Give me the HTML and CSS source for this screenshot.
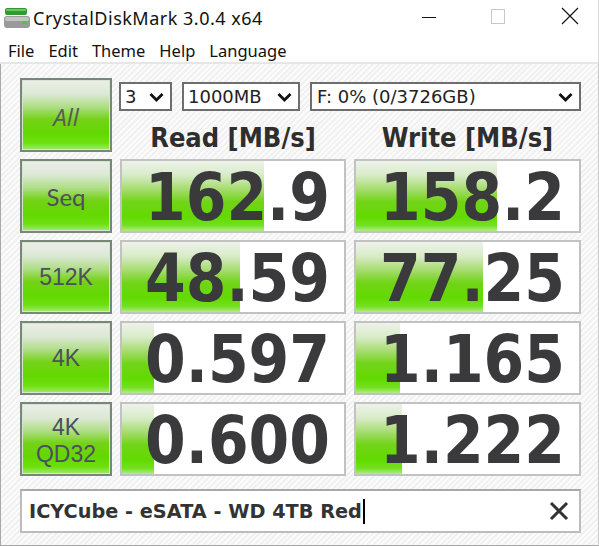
FILE: index.html
```html
<!DOCTYPE html>
<html>
<head>
<meta charset="utf-8">
<link rel="stylesheet" href="styles.css">
</head>
<body>
<div class="window">
  <div class="titlebar">
    <svg class="appicon" width="28" height="24" viewBox="0 0 28 24">
      <rect x="2" y="2" width="22" height="7" rx="2" fill="#2f9a2f"/>
      <rect x="3" y="3" width="20" height="2" rx="1" fill="#66cc55"/>
      <rect x="1" y="10" width="26" height="12" rx="3" fill="#9a9a9a"/>
      <rect x="2" y="11" width="24" height="4" rx="2" fill="#c4c4c4"/>
      <rect x="19" y="15" width="5" height="3" rx="1" fill="#44cc33"/>
    </svg>
    <span class="title">CrystalDiskMark 3.0.4 x64</span>
    <div class="controls">
      <svg class="ctl min" width="16" height="16" viewBox="0 0 16 16"><line x1="1" y1="8.5" x2="15" y2="8.5" stroke="#111" stroke-width="1"/></svg>
      <svg class="ctl max" width="16" height="16" viewBox="0 0 16 16"><rect x="1.5" y="1.5" width="13" height="14" fill="none" stroke="#c8c8c8" stroke-width="1"/></svg>
      <svg class="ctl close" width="18" height="18" viewBox="0 0 18 18"><path d="M1 1 L17 17 M17 1 L1 17" stroke="#111" stroke-width="1.1"/></svg>
    </div>
  </div>
  <div class="menubar">
    <span>File</span><span>Edit</span><span>Theme</span><span>Help</span><span>Language</span>
  </div>
  <div class="main">
    <div class="grid">
      <div class="btn btn-all">All</div>
      <div class="top">
        <div class="selects">
          <div class="select s-count"><span>3</span><svg width="15" height="10" viewBox="0 0 15 10"><polyline points="1.5,2 7.5,8 13.5,2" fill="none" stroke="#111" stroke-width="2.8"/></svg></div>
          <div class="select s-size"><span>1000MB</span><svg width="15" height="10" viewBox="0 0 15 10"><polyline points="1.5,2 7.5,8 13.5,2" fill="none" stroke="#111" stroke-width="2.8"/></svg></div>
          <div class="select s-drive"><span>F: 0% (0/3726GB)</span><svg width="15" height="10" viewBox="0 0 15 10"><polyline points="1.5,2 7.5,8 13.5,2" fill="none" stroke="#111" stroke-width="2.8"/></svg></div>
        </div>
        <div class="headers">
          <div class="hdr">Read [MB/s]</div>
          <div class="hdr">Write [MB/s]</div>
        </div>
      </div>

      <div class="btn btn-seq">Seq</div>
      <div class="cell" style="background-size:142px 100%, auto"><span class="val">162.9</span></div>
      <div class="cell" style="background-size:141px 100%, auto"><span class="val">158.2</span></div>

      <div class="btn">512K</div>
      <div class="cell" style="background-size:118px 100%, auto"><span class="val">48.59</span></div>
      <div class="cell" style="background-size:127px 100%, auto"><span class="val">77.25</span></div>

      <div class="btn">4K</div>
      <div class="cell" style="background-size:32px 100%, auto"><span class="val">0.597</span></div>
      <div class="cell" style="background-size:44px 100%, auto"><span class="val">1.165</span></div>

      <div class="btn btn-two"><span class="ln">4K</span><span class="ln">QD32</span></div>
      <div class="cell" style="background-size:32px 100%, auto"><span class="val">0.600</span></div>
      <div class="cell" style="background-size:46px 100%, auto"><span class="val">1.222</span></div>
    </div>

    <div class="comment">
      <span class="ctext">ICYCube - eSATA - WD 4TB Red</span><span class="caret"></span>
      <svg class="cclose" width="20" height="20" viewBox="0 0 20 20"><path d="M2 2 L18 18 M18 2 L2 18" stroke="#333" stroke-width="3"/></svg>
    </div>
  </div>
</div>
</body>
</html>
```

FILE: styles.css
```css
* { box-sizing: border-box; }
html, body { margin: 0; padding: 0; }
body {
  width: 599px;
  height: 546px;
  background: #ffffff;
  font-family: "Noto Sans", "Open Sans", sans-serif;
  overflow: hidden;
}
.window {
  width: 599px;
  height: 546px;
  display: flex;
  flex-direction: column;
}
.titlebar {
  height: 35px;
  display: flex;
  align-items: center;
  padding-left: 3px;
  background: #fff;
  border-right: 1px solid #d8d8d8;
}
.appicon { margin-right: 2px; margin-top: 1px; }
.title {
  font-size: 18px;
  color: #111;
  letter-spacing: 0.5px;
}
.controls {
  margin-left: auto;
  display: flex;
  align-items: center;
  height: 35px;
}
.ctl { display: block; }
.min { margin-right: 53px; margin-top: -2px; }
.max { margin-right: 55px; margin-top: -3px; }
.close { margin-right: 19px; margin-top: -3px; }

.menubar {
  height: 29px;
  display: flex;
  align-items: center;
  padding-left: 8px;
  padding-top: 3px;
  gap: 14px;
  font-size: 16.5px;
  color: #111;
  border-bottom: 2px solid #e6e6e6;
  border-right: 1px solid #d8d8d8;
}

.main {
  flex: 1;
  border-left: 1px solid #a9a9a9;
  border-right: 1px solid #c8c8c8;
  border-bottom: 1px solid #a9a9a9;
  padding: 14px 0 0 19px;
  background-color: #f7f7f7;
  background-image: repeating-linear-gradient(135deg, #fbfbfb 0px, #fbfbfb 2px, #f1f1f1 2px, #f1f1f1 4px);
}

.grid {
  display: grid;
  grid-template-columns: 92px 226px 227px;
  grid-auto-rows: 74px;
  column-gap: 8px;
  row-gap: 7px;
}

.btn {
  border: 2px solid #788876;
  box-shadow: inset 0 0 0 1px #d8e4d2;
  background: linear-gradient(to bottom, #eceeea 0%, #dce8d4 20%, #b0de88 38%, #74d218 56%, #62d800 76%, #6ee010 90%, #a4e878 100%);
  display: flex;
  align-items: center;
  justify-content: center;
  font-family: "Liberation Sans", "Open Sans", sans-serif;
  font-size: 23px;
  color: #4e4e5e;
}
.btn-all { font-family: "Open Sans", sans-serif; font-style: italic; font-size: 24px; color: #5a5a5a; padding-top: 2px; }
.btn-seq { font-family: "Lato", "Open Sans", sans-serif; font-size: 24px; }
.btn-two {
  flex-direction: column;
  gap: 1px;
  padding-top: 3px;
}
.ln { display: block; line-height: 26px; height: 26px; }

.top {
  grid-column: 2 / 4;
  display: flex;
  flex-direction: column;
}
.selects {
  display: flex;
  gap: 10px;
  margin-top: 4px;
  margin-left: -1px;
}
.select {
  height: 29px;
  border: 2px solid #6e6e6e;
  background: #fff;
  display: flex;
  align-items: center;
  padding-left: 4px;
  padding-right: 6px;
  font-family: "DejaVu Sans", sans-serif;
  font-size: 18px;
  color: #222;
}
.select span { flex: 1; line-height: 1; }
.select svg { display: block; }
.s-count { width: 53px; }
.s-size { width: 118px; }
.s-drive { width: 271px; padding-left: 5px; }

.headers {
  flex: 1;
  display: grid;
  grid-template-columns: 226px 227px;
  column-gap: 8px;
  align-items: center;
  padding-top: 11px;
}
.hdr {
  text-align: center;
  font-family: "DejaVu Sans Condensed", "DejaVu Sans", sans-serif;
  font-weight: bold;
  font-size: 27px;
  line-height: 1;
  color: #2e2e2e;
}

.cell {
  border: 2px solid #c2c2c2;
  background-color: #ffffff;
  background-image:
    linear-gradient(to bottom, #eef2ea 0%, #d8ecc8 20%, #a6dc70 40%, #72d418 58%, #62da00 80%, #74e020 92%, #b0ec88 100%),
    linear-gradient(#ffffff, #ffffff);
  background-repeat: no-repeat;
  display: flex;
  align-items: center;
  justify-content: flex-end;
  padding-right: 14px;
}
.val {
  font-family: "DejaVu Sans Condensed", "DejaVu Sans", sans-serif;
  font-weight: bold;
  font-size: 65px;
  line-height: 1;
  color: #3a3a3c;
  margin-top: 3px;
}

.comment {
  margin-top: 13px;
  width: 561px;
  height: 44px;
  border: 2px solid #bcbcbc;
  border-top-color: #a8a8a8;
  background: #fff;
  display: flex;
  align-items: center;
  padding-left: 7px;
  padding-right: 10px;
}
.ctext {
  font-family: "DejaVu Sans", sans-serif;
  font-weight: bold;
  font-size: 19.3px;
  color: #333;
}
.caret {
  width: 2px;
  height: 25px;
  background: #000;
  margin-left: 1px;
}
.cclose { margin-left: auto; display: block; }
```
